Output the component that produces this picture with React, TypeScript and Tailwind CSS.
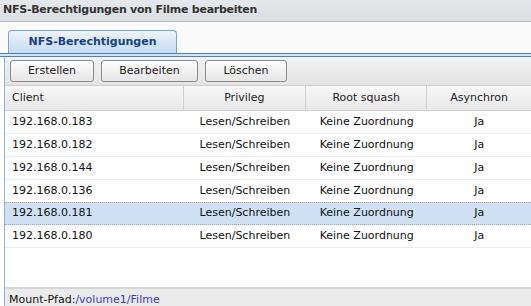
const rows = [
  { client: "192.168.0.183" },
  { client: "192.168.0.182" },
  { client: "192.168.0.144" },
  { client: "192.168.0.136" },
  { client: "192.168.0.181", selected: true },
  { client: "192.168.0.180" },
];

function ToolButton({ label, width }: { label: string; width: string }) {
  return (
    <button
      type="button"
      className={`${width} h-[22px] rounded-[3px] border border-[#8c8c8c] bg-gradient-to-b from-[#fdfdfd] to-[#e6e6e6] text-[11px] text-[#222]`}
    >
      {label}
    </button>
  );
}

export default function App() {
  return (
    <div className="w-[531px] h-[306px] overflow-hidden bg-white font-['DejaVu_Sans',sans-serif] text-[11px] text-[#111] flex flex-col">
      <div className="h-[22px] shrink-0 bg-gradient-to-b from-[#e6e9ec] to-[#dadee2] border-b border-[#b9bcbf] px-[3px] flex items-center text-[11px] tracking-[-0.25px] font-bold text-[#333]">
        NFS-Berechtigungen von Filme bearbeiten
      </div>
      <div className="h-[8px] shrink-0 bg-[#fafafa]" />
      <div className="h-[23px] shrink-0 bg-[#fafafa] pl-[8px] flex items-end">
        <div className="w-[169px] h-[23px] rounded-t-[4px] border border-b-0 border-[#7da3d4] bg-gradient-to-b from-[#eef4fb] to-[#c5daf2] flex items-center justify-center font-bold text-[#15428b]">
          NFS-Berechtigungen
        </div>
      </div>
      <div className="h-[4px] shrink-0 border-y border-[#4b7fc0] bg-[#d4e3f5]" />
      <div className="flex-1 flex flex-col ml-[4px] border-l border-[#8db2e3]">
        <div className="h-[29px] shrink-0 bg-gradient-to-b from-[#f3f3f3] to-[#e3e3e3] border-b border-[#d0d0d0] flex items-center gap-[7px] pl-[5px]">
          <ToolButton label="Erstellen" width="w-[84px]" />
          <ToolButton label="Bearbeiten" width="w-[97px]" />
          <ToolButton label="Löschen" width="w-[82px]" />
        </div>
        <div className="h-[25px] shrink-0 flex bg-gradient-to-b from-[#f7f7f7] to-[#e8e8e8] border-b border-[#d0d0d0] text-[#222]">
          <div className="w-[181px] pl-[7px] flex items-center border-r border-[#d0d0d0]">Client</div>
          <div className="w-[124px] flex items-center justify-center border-r border-[#d0d0d0]">Privileg</div>
          <div className="w-[123px] flex items-center justify-center border-r border-[#d0d0d0]">Root squash</div>
          <div className="w-[105px] flex items-center justify-center">Asynchron</div>
        </div>
        <div className="flex-1 bg-white">
          {rows.map((r) => (
            <div
              key={r.client}
              className={`h-[23px] flex items-center border-b ${
                r.selected
                  ? "bg-[#cfe0f5] border-dotted border-[#9aa7b8] border-t -mt-px"
                  : "border-[#ececec]"
              }`}
            >
              <div className="w-[181px] pl-[7px]">{r.client}</div>
              <div className="w-[124px] text-center">Lesen/Schreiben</div>
              <div className="w-[123px] text-center">Keine Zuordnung</div>
              <div className="w-[105px] text-center">Ja</div>
            </div>
          ))}
        </div>
        <div className="h-[19px] shrink-0 bg-[#ebebeb] border-t-2 border-[#d6d6d6] pl-[4px] pt-[3px]">
          Mount-Pfad:<span className="text-[#3a3acc]">/volume1/Filme</span>
        </div>
      </div>
    </div>
  );
}
